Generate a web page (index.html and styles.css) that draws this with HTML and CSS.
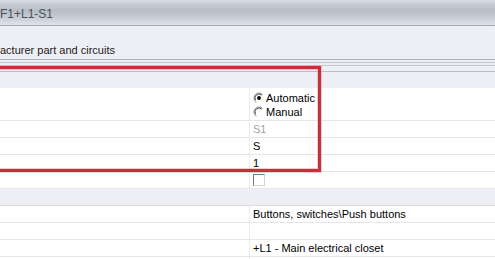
FILE: index.html
```html
<!DOCTYPE html>
<html>
<head>
<meta charset="utf-8">
<link rel="stylesheet" href="styles.css">
</head>
<body>
<div class="page">
  <div class="titlebar"><span class="title">F1+L1-S1</span></div>
  <div class="subbar"><span class="subtitle">acturer part and circuits</span></div>
  <div class="strip">
    <div class="strip-a"></div>
    <div class="strip-b"></div>
    <div class="strip-c"></div>
  </div>
  <div class="grid">
    <div class="group"></div>
    <div class="row tall">
      <div class="label"></div>
      <div class="value radios">
        <div class="radio-line">
          <svg class="radio" viewBox="0 0 12 12" width="12" height="12">
            <circle cx="6" cy="6" r="5" fill="#fff"/>
            <path d="M9.54 2.46 A5 5 0 1 0 3.5 10.33" fill="none" stroke="#8a8a8a" stroke-width="1"/>
            <path d="M8.8 3.2 A4 4 0 0 0 2.5 8" fill="none" stroke="#3c3c3c" stroke-width="0.9"/>
            <circle cx="6" cy="6" r="1.9" fill="#000"/>
          </svg>
          <span>Automatic</span>
        </div>
        <div class="radio-line">
          <svg class="radio" viewBox="0 0 12 12" width="12" height="12">
            <circle cx="6" cy="6" r="5" fill="#fff"/>
            <path d="M9.54 2.46 A5 5 0 1 0 3.5 10.33" fill="none" stroke="#8a8a8a" stroke-width="1"/>
            <path d="M8.8 3.2 A4 4 0 0 0 2.5 8" fill="none" stroke="#3c3c3c" stroke-width="0.9"/>
          </svg>
          <span>Manual</span>
        </div>
      </div>
    </div>
    <div class="row"><div class="label"></div><div class="value muted">S1</div></div>
    <div class="row"><div class="label"></div><div class="value">S</div></div>
    <div class="row"><div class="label"></div><div class="value">1</div></div>
    <div class="row"><div class="label"></div><div class="value"><span class="checkbox"></span></div></div>
    <div class="group group-line"></div>
    <div class="row"><div class="label"></div><div class="value">Buttons, switches\Push buttons</div></div>
    <div class="row"><div class="label"></div><div class="value"></div></div>
    <div class="row"><div class="label"></div><div class="value">+L1 - Main electrical closet</div></div>
    <div class="row"><div class="label"></div><div class="value"></div></div>
  </div>
  <div class="highlight"></div>
</div>
</body>
</html>
```

FILE: styles.css
```css
html, body {
  margin: 0;
  padding: 0;
  background: #ffffff;
  overflow: hidden;
}

.page {
  position: relative;
  width: 495px;
  height: 259px;
  overflow: hidden;
  font-family: "Liberation Sans", Arial, sans-serif;
  font-size: 11px;
  color: #000;
}

.titlebar {
  height: 25px;
  border-bottom: 1px solid #a4a6b0;
  background: linear-gradient(#dadde4 0px, #c3c9d1 5px, #b7bec7 11px, #c6ccd4 17px, #dfe2ea 25px);
  display: flex;
  align-items: flex-end;
}

.title {
  font-size: 12px;
  color: #4c5258;
  padding-bottom: 5px;
  line-height: 12px;
}

.subbar {
  height: 33px;
  border-bottom: 1px solid #aeb0b8;
  background: #eeeef5;
  display: flex;
  align-items: flex-end;
}

.subtitle {
  line-height: 11px;
  padding-bottom: 3px;
  color: #222;
}

.strip {
  background: #eeeef5;
}

.strip-a {
  height: 2px;
  border-bottom: 1px solid #c4c4cc;
}

.strip-b {
  height: 2px;
  border-bottom: 1px solid #c4c4cc;
}

.strip-c {
  height: 5px;
  border-bottom: 1px solid #bcbcc4;
}

.grid {
  display: flex;
  flex-direction: column;
}

.group {
  height: 16px;
  background: #eeeef5;
}

.group-line {
  border-bottom: 1px solid #dcdce4;
}

.row {
  display: grid;
  grid-template-columns: 249px 1fr;
  height: 16px;
  border-bottom: 1px solid #e6e6e6;
}

.row.tall {
  height: 32px;
}

.label {
  background: #fff;
}

.value {
  border-left: 1px solid #ececec;
  padding-left: 3px;
  line-height: 16px;
  white-space: nowrap;
  display: flex;
  align-items: center;
}

.value.muted {
  color: #a2a2a2;
}

.radios {
  flex-direction: column;
  align-items: flex-start;
  justify-content: center;
  padding-top: 1px;
}

.radio-line {
  display: flex;
  align-items: center;
  height: 14px;
  gap: 1px;
}

.radio {
  display: block;
  flex: none;
}

.checkbox {
  display: block;
  width: 10px;
  height: 10px;
  border-top: 1px solid #7a7a7a;
  border-left: 1px solid #7a7a7a;
  border-right: 1px solid #d4d4d4;
  border-bottom: 1px solid #d4d4d4;
  background: #fff;
}

.highlight {
  position: absolute;
  left: -10px;
  top: 66px;
  width: 325px;
  height: 100px;
  border: 3px solid #c3323b;
  box-shadow: 0 0 0 1px rgba(232, 160, 165, 0.55), inset 0 0 0 1px rgba(232, 160, 165, 0.55);
}
```
